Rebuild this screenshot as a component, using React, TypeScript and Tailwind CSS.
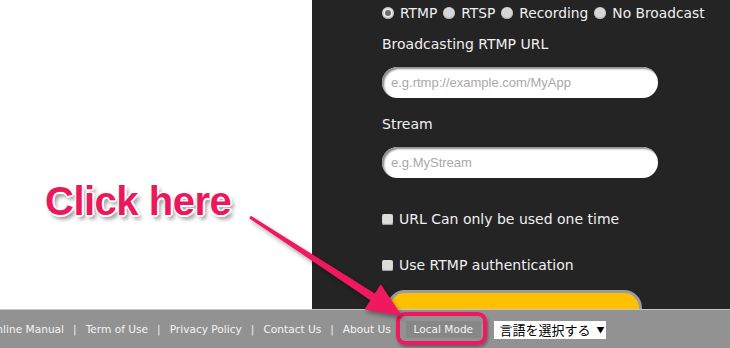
import type { ReactNode } from "react";

const sansFont = "font-['DejaVu_Sans',Verdana,sans-serif]";
const footerLinks = ["Online Manual", "Term of Use", "Privacy Policy", "Contact Us", "About Us"];
const modes = ["RTMP", "RTSP", "Recording", "No Broadcast"];

function Radio({ checked }: { checked?: boolean }) {
  return (
    <span className="mr-[6px] flex h-[12px] w-[12px] items-center justify-center rounded-full bg-[#d6d6d6] shadow-[inset_0_-1px_1px_#aaa]">
      {checked && (
        <span className="h-[6px] w-[6px] rounded-full bg-[#6c6c6c] ring-1 ring-[#f2f2f2]" />
      )}
    </span>
  );
}

function CheckRow({ children }: { children: ReactNode }) {
  return (
    <div className="flex h-5 items-center">
      <span className="mr-[6px] h-[11px] w-[11px] rounded-[2px] bg-[#dcdcdc] shadow-[inset_0_-1px_1px_#999]" />
      <span>{children}</span>
    </div>
  );
}

function TextInput({ placeholder }: { placeholder: string }) {
  return (
    <div className="flex h-[31px] w-[276px] items-center rounded-full bg-white pl-[9px] shadow-[inset_2px_2px_2px_#8a8a8a] font-['Liberation_Sans',Arial,sans-serif] text-[13px] text-[#a9a9a9]">
      {placeholder}
    </div>
  );
}

function Separator({ light }: { light?: boolean }) {
  return <span className={light ? "px-[1px] text-[#e6e6e6]" : "px-[9px] text-[#eeeeee]"}>|</span>;
}

export default function App() {
  return (
    <div className="relative h-[348px] w-[730px] overflow-hidden bg-white">
      <div className="flex h-[309px]">
        <div className="w-[312px]" />

        <div className={`${sansFont} h-full flex-1 overflow-hidden bg-[#242424] pl-[70px] pt-[3px] text-[14px] leading-5 text-[#f0f0f0]`}>
          <div className="flex h-5 items-center text-[13.8px]">
            {modes.map((mode, index) => (
              <span key={mode} className="flex items-center">
                <Radio checked={index === 0} />
                <span className="mr-[6px]">{mode}</span>
              </span>
            ))}
          </div>

          <div className="mt-[11px]">Broadcasting RTMP URL</div>
          <div className="mt-[13px]">
            <TextInput placeholder="e.g.rtmp://example.com/MyApp" />
          </div>

          <div className="mt-[16px]">Stream</div>
          <div className="mt-[13px]">
            <TextInput placeholder="e.g.MyStream" />
          </div>

          <div className="mt-[31px]">
            <CheckRow>URL Can only be used one time</CheckRow>
          </div>
          <div className="mt-[26px]">
            <CheckRow>Use RTMP authentication</CheckRow>
          </div>

          <div className="ml-[5px] mt-[15px] h-[44px] w-[255px] rounded-t-[18px] border-[3px] border-[#9c9c9c] bg-[#ffc000]" />
        </div>
      </div>

      <footer className={`${sansFont} flex h-[39px] items-center border-t border-[#c6c6c6] bg-[#929292] pt-[1px] text-[10.6px] text-[#f4f4f4]`}>
        <div className="-ml-[12px] flex items-center">
          {footerLinks.map((link, index) => (
            <span key={link} className="flex items-center">
              {index > 0 && <Separator />}
              <span>{link}</span>
            </span>
          ))}
        </div>

        <span className="ml-[15px] flex h-[17px] w-[75px] items-center justify-center bg-[#878787]">
          Local Mode
        </span>
        <Separator light />

        <div className="ml-[8px] flex h-[18px] w-[112px] items-center bg-white pl-[5px] font-['Noto_Sans_CJK_JP',sans-serif] text-[13px] leading-none text-black">
          <span>言語を選択する</span>
          <span className="ml-[6px] text-[8px]">▼</span>
        </div>
      </footer>

      {/* annotation overlay */}
      <div className="absolute left-[396px] top-[312px] h-[33px] w-[91px] rounded-[9px] border-4 border-[#f0185e] shadow-[1px_2px_3px_rgba(0,0,0,0.35)]" />

      <svg className="pointer-events-none absolute left-0 top-0 drop-shadow-[2px_3px_2px_rgba(0,0,0,0.35)]" width="730" height="348">
        <polygon
          fill="#f0185e"
          points="249.2,218.3 370.4,300.3 364.4,309.5 402,316 380.8,284.3 374.8,293.5 250.8,215.7"
        />
      </svg>

      <div className="absolute left-[45px] top-[181px] font-['Liberation_Sans',Arial,sans-serif] text-[40px] font-black leading-none tracking-[-0.5px] text-[#ec185c] [text-shadow:1px_1px_0_#fff,-1px_-1px_0_#fff,1px_-1px_0_#fff,-1px_1px_0_#fff,0_2px_0_#fff,2px_0_0_#fff,3px_4px_4px_rgba(0,0,0,0.45)]">
        Click here
      </div>
    </div>
  );
}
